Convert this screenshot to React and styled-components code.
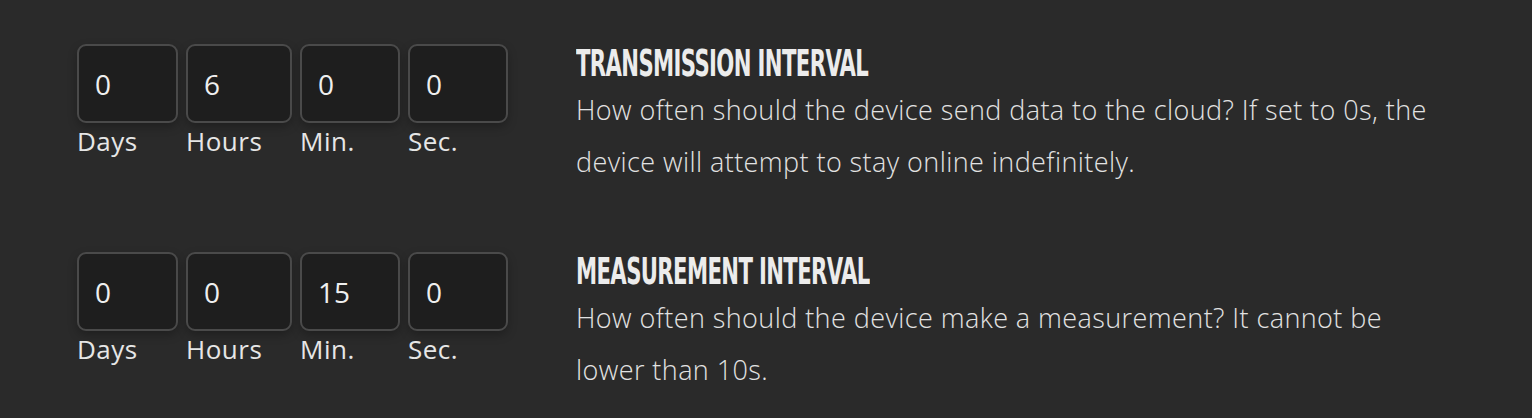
import React from 'react';
import styled, { createGlobalStyle } from 'styled-components';

const GlobalStyle = createGlobalStyle`
    html, body {
        margin: 0;
        padding: 0;
        background: #2a2a2a;
    }
    * { box-sizing: border-box; }
`;

const settings = [
    {
        title: 'Transmission Interval',
        text: 'How often should the device send data to the cloud? If set to 0s, the device will attempt to stay online indefinitely.',
        values: [0, 6, 0, 0],
    },
    {
        title: 'Measurement Interval',
        text: 'How often should the device make a measurement? It cannot be lower than 10s.',
        values: [0, 0, 15, 0],
    },
];

const units = [
    { label: 'Days', width: 101 },
    { label: 'Hours', width: 106 },
    { label: 'Min.', width: 100 },
    { label: 'Sec.', width: 100 },
];

const App = () => {
    return (
        <Wrapper>
            <GlobalStyle />
            {settings.map((s) => (
                <Row key={s.title}>
                    <Fields>
                        {units.map((u, i) => (
                            <Field key={u.label} $width={u.width}>
                                <Input type='text' defaultValue={s.values[i]} />
                                <Label>{u.label}</Label>
                            </Field>
                        ))}
                    </Fields>
                    <Info>
                        <Title><span>{s.title}</span></Title>
                        <Text>{s.text}</Text>
                    </Info>
                </Row>
            ))}
        </Wrapper>
    );
}

export default App;

const Wrapper = styled.div`
    width: 100%;
    min-height: 418px;
    background: #2a2a2a;
    padding: 44px 0 0 77px;
    display: flex;
    flex-direction: column;
    gap: 64px;
    font-family: 'Open Sans', 'Liberation Sans', sans-serif;
    color: #e6e6e6;
`;

const Row = styled.div`
    display: grid;
    grid-template-columns: 499px 870px;
    align-items: start;
`;

const Fields = styled.div`
    display: flex;
    gap: 8px;
`;

const Field = styled.div`
    width: ${(p) => p.$width}px;
    display: flex;
    flex-direction: column;
`;

const Input = styled.input`
    width: 100%;
    height: 79px;
    background: #1e1e1e;
    border: 2px solid #4a4a4a;
    border-radius: 9px;
    box-shadow: 0 4px 10px rgba(0, 0, 0, 0.25);
    color: #efefef;
    font-family: 'Open Sans', sans-serif;
    font-weight: 400;
    font-size: 28px;
    padding: 0 0 0 16px;
    outline: none;
`;

const Label = styled.span`
    font-size: 26px;
    font-weight: 400;
    line-height: 32px;
    margin-top: 2px;
    letter-spacing: 0.5px;
    color: #e6e6e6;
`;

const Info = styled.div`
    display: flex;
    flex-direction: column;
`;

const Title = styled.h3`
    margin: 0;
    height: 38px;
    font-family: 'DejaVu Sans Condensed', 'DejaVu Sans', sans-serif;
    font-weight: 700;
    font-size: 38px;
    line-height: 38px;
    letter-spacing: -1px;
    text-transform: uppercase;
    white-space: nowrap;
    color: #ececec;

    span {
        display: inline-block;
        transform: scaleX(0.62);
        transform-origin: left center;
    }
`;

const Text = styled.p`
    margin: 2px 0 0;
    font-weight: 300;
    font-size: 27px;
    line-height: 52px;
    letter-spacing: 0.42px;
    color: #e2e2e2;
`;
